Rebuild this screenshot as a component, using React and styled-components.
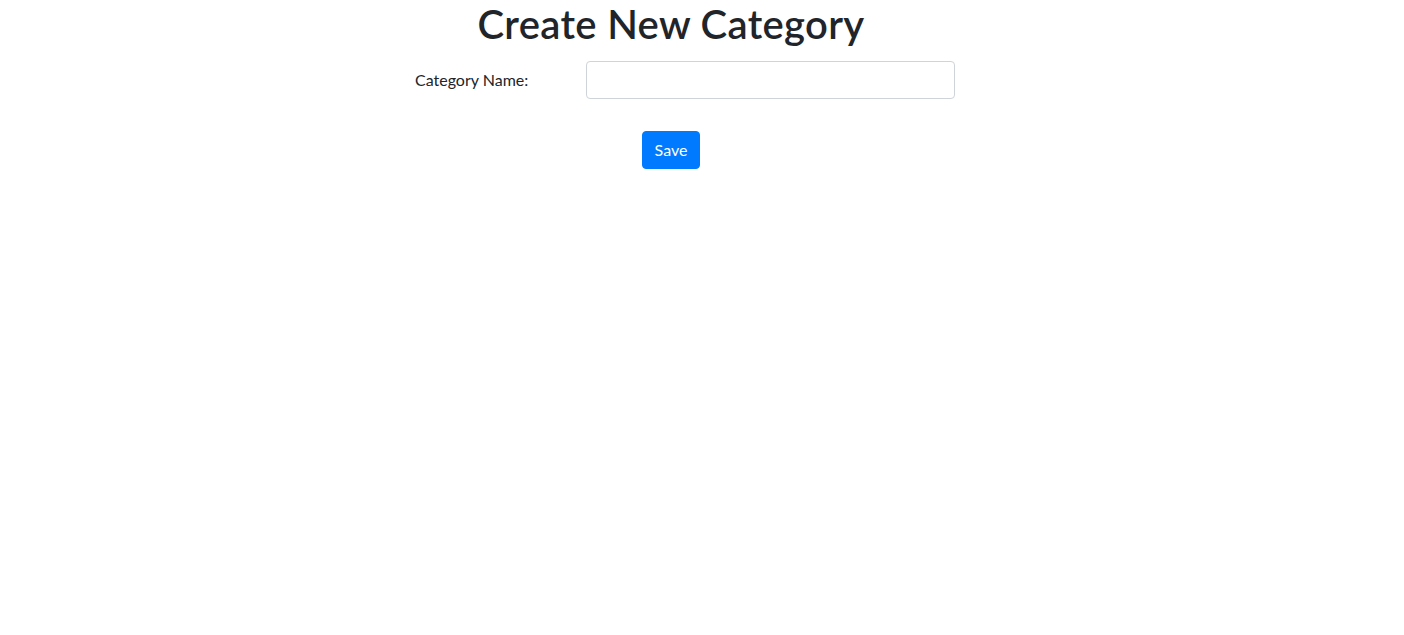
import React from "react";
import styled, { createGlobalStyle } from "styled-components";

const Global = createGlobalStyle`
  html, body { margin: 0; padding: 0; background: #fff; }
  body {
    font-family: Lato, "Noto Sans", sans-serif;
    font-size: 16px;
    line-height: 1.5;
    color: #212529;
  }
  *, *::before, *::after { box-sizing: border-box; }
`;

const Page = styled.div`
  padding-left: 400px;
`;

const Title = styled.h1`
  margin: 0;
  width: 542px;
  text-align: center;
  font-size: 40px;
  font-weight: 600;
  letter-spacing: 0.35px;
  line-height: 1.2;
  color: #212529;
`;

const Form = styled.form`
  margin-top: 13px;
  display: flex;
  flex-direction: column;
`;

const Row = styled.div`
  display: flex;
  align-items: center;
`;

const Label = styled.label`
  width: 186px;
  padding-left: 15px;
  font-size: 16px;
  color: #212529;
`;

const Input = styled.input`
  width: 369px;
  height: 38px;
  padding: 6px 12px;
  border: 1px solid #ced4da;
  border-radius: 4px;
  font: inherit;
  color: #495057;
  outline: none;
`;

const Button = styled.button`
  margin-top: 32px;
  margin-left: 242px;
  align-self: flex-start;
  width: 58px;
  height: 38px;
  padding: 0;
  border: 1px solid #007bff;
  border-radius: 4px;
  background: #007bff;
  color: #fff;
  font: inherit;
  font-size: 16px;
  cursor: pointer;
`;

export default function App() {
  return (
    <Page>
      <Global />
      <Title>Create New Category</Title>
      <Form onSubmit={(e) => e.preventDefault()}>
        <Row>
          <Label htmlFor="name">Category Name:</Label>
          <Input id="name" type="text" />
        </Row>
        <Button type="submit">Save</Button>
      </Form>
    </Page>
  );
}
